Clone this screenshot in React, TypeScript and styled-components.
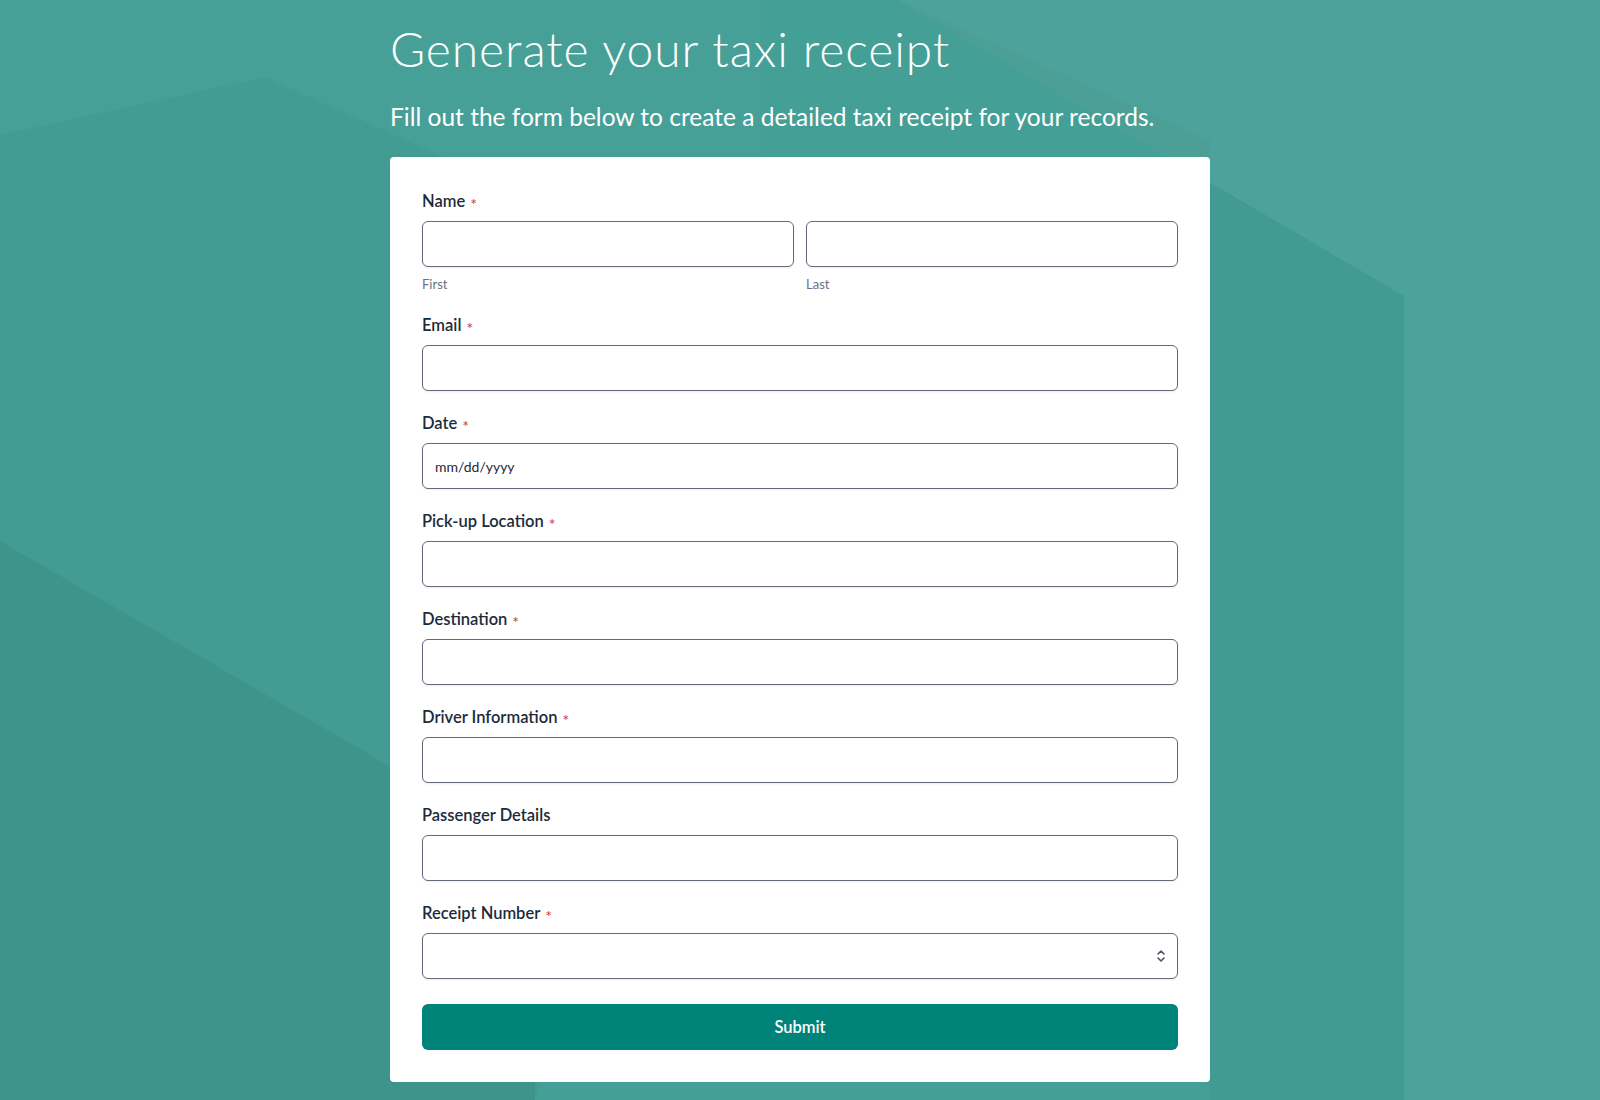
import React from 'react';
import styled, { createGlobalStyle } from 'styled-components';

const GlobalStyle = createGlobalStyle`
  html, body { margin: 0; padding: 0; }
  body {
    font-family: Lato, "Noto Sans", sans-serif;
    background: #449f96;
    -webkit-font-smoothing: antialiased;
  }
  *, *::before, *::after { box-sizing: border-box; }
`;

const Page = styled.div`
  position: relative;
  min-height: 1100px;
  overflow: hidden;
`;

const Backdrop = styled.svg`
  position: absolute;
  inset: 0;
  width: 100%;
  height: 100%;
  z-index: 0;
`;

const Container = styled.main`
  position: relative;
  z-index: 1;
  width: 820px;
  margin: 0 auto;
  padding: 20px 0 18px;
`;

const Title = styled.h1`
  margin: 0;
  font-family: Lato, "Noto Sans", sans-serif;
  font-weight: 300;
  font-size: 48px;
  letter-spacing: 0.9px;
  line-height: 57px;
  color: #ffffff;
`;

const Subtitle = styled.p`
  margin: 25px 0 26px;
  font-family: Lato, "Noto Sans", sans-serif;
  font-weight: 400;
  font-size: 24.5px;
  line-height: 29px;
  color: #ffffff;
`;

const Card = styled.form`
  background: #ffffff;
  border-radius: 4px;
  padding: 32px 32px 32px;
  display: flex;
  flex-direction: column;
  gap: 20px;
`;

const Field = styled.div`
  display: flex;
  flex-direction: column;
`;

const Label = styled.label`
  display: block;
  height: 24px;
  font-family: Lato, "Noto Sans", sans-serif;
  font-weight: 600;
  font-size: 16.5px;
  line-height: 24px;
  color: #1c2b3b;
  margin-bottom: 8px;
`;

const Required = styled.span`
  color: #d2392b;
  font-size: 16px;
  line-height: 0;
  font-weight: 400;
  margin-left: 5px;
  position: relative;
  top: 3px;
`;

const NameRow = styled.div`
  display: grid;
  grid-template-columns: 1fr 1fr;
  gap: 12px;
`;

const SubField = styled.div`
  display: flex;
  flex-direction: column;
`;

const SubLabel = styled.span`
  margin-top: 8px;
  font-family: Lato, "Noto Sans", sans-serif;
  font-size: 13px;
  line-height: 18px;
  color: #6b7280;
`;

const Input = styled.input`
  width: 100%;
  height: 46px;
  border: 1px solid #626a78;
  border-radius: 6px;
  background: #ffffff;
  box-shadow: 0 1px 2px rgba(16, 24, 40, 0.08);
  padding: 0 12px;
  font-family: Lato, "Noto Sans", sans-serif;
  font-size: 14px;
  color: #1f2937;
  outline: none;
  &::placeholder { color: #1f2937; opacity: 1; }
`;

const InputWrap = styled.div`
  position: relative;
`;

const Spinner = styled.span`
  position: absolute;
  right: 12px;
  top: 50%;
  transform: translateY(-50%);
  display: flex;
  color: #4b5563;
  pointer-events: none;
`;

const SubmitButton = styled.button`
  margin-top: 5px;
  height: 46px;
  width: 100%;
  border: none;
  border-radius: 6px;
  background: #00847a;
  color: #ffffff;
  font-family: Lato, "Noto Sans", sans-serif;
  font-weight: 600;
  font-size: 16.5px;
  cursor: pointer;
`;

const fields: { label: string; required: boolean; placeholder?: string; spinner?: boolean }[] = [
  { label: 'Email', required: true },
  { label: 'Date', required: true, placeholder: 'mm/dd/yyyy' },
  { label: 'Pick-up Location', required: true },
  { label: 'Destination', required: true },
  { label: 'Driver Information', required: true },
  { label: 'Passenger Details', required: false },
  { label: 'Receipt Number', required: true, spinner: true },
];

export default function App() {
  return (
    <>
      <GlobalStyle />
      <Page>
        <Backdrop viewBox="0 0 1600 1100" preserveAspectRatio="none" aria-hidden="true">
          <rect x="0" y="0" width="1600" height="1100" fill="#449f96" />
          <polygon points="0,0 763,0 763,300 265,77 0,135" fill="#ffffff" opacity="0.01" />
          <polygon points="0,135 265,77 763,300 763,500 535,1100 0,1100" fill="#000000" opacity="0.015" />
          <polygon points="0,541 535,850 535,1100 0,1100" fill="#000000" opacity="0.05" />
          <polygon points="898,0 1600,0 1600,1100 1404,1100 1404,296" fill="#ffffff" opacity="0.05" />
          <polygon points="898,0 1404,296 1404,1100 1210,1100 1210,140" fill="#000000" opacity="0.025" />
        </Backdrop>
        <Container>
          <Title>Generate your taxi receipt</Title>
          <Subtitle>Fill out the form below to create a detailed taxi receipt for your records.</Subtitle>
          <Card onSubmit={(e) => e.preventDefault()}>
            <Field>
              <Label>
                Name<Required>*</Required>
              </Label>
              <NameRow>
                <SubField>
                  <Input type="text" />
                  <SubLabel>First</SubLabel>
                </SubField>
                <SubField>
                  <Input type="text" />
                  <SubLabel>Last</SubLabel>
                </SubField>
              </NameRow>
            </Field>
            {fields.map((f) => (
              <Field key={f.label}>
                <Label>
                  {f.label}
                  {f.required && <Required>*</Required>}
                </Label>
                <InputWrap>
                  <Input type="text" placeholder={f.placeholder} />
                  {f.spinner && (
                    <Spinner>
                      <svg width="10" height="16" viewBox="0 0 10 16" fill="none" stroke="currentColor" strokeWidth="1.6" strokeLinecap="round" strokeLinejoin="round">
                        <polyline points="2,6 5,3 8,6" />
                        <polyline points="2,10 5,13 8,10" />
                      </svg>
                    </Spinner>
                  )}
                </InputWrap>
              </Field>
            ))}
            <SubmitButton type="submit">Submit</SubmitButton>
          </Card>
        </Container>
      </Page>
    </>
  );
}
